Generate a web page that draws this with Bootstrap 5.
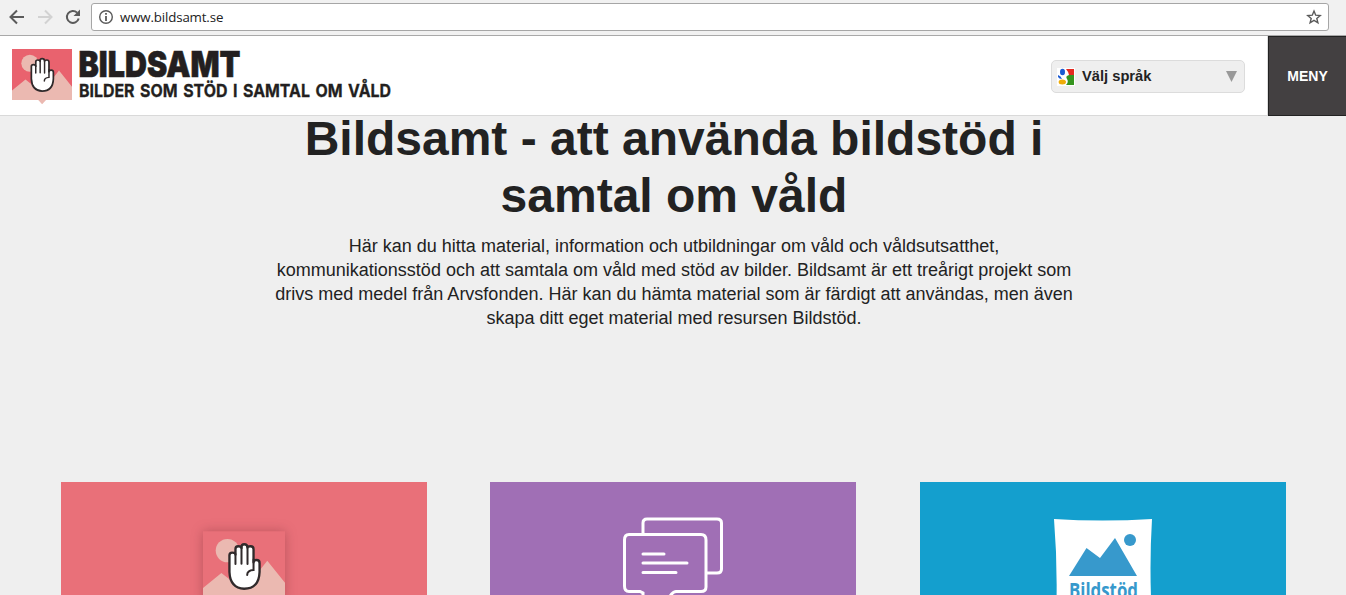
<!DOCTYPE html>
<html lang="sv">
<head>
  <meta charset="UTF-8" />
  <title>Bildsamt</title>
  <link href="https://cdn.jsdelivr.net/npm/bootstrap@5.3.0/dist/css/bootstrap.min.css" rel="stylesheet" />
  <style>
    body {
      background: #efefef;
      color: #222;
      font-family: "Liberation Sans", Arial, sans-serif;
      height: 595px;
      overflow: hidden;
    }
    svg { display: block; flex: none; }

    .browser-bar { height: 36px; background: #f1f1f1; border-bottom: 1px solid #a9a9a9; padding: 0 17px 2px 8px; }
    .browser-nav { width: 83px; }
    .address { height: 28px; border: 1px solid #a6a6a6; border-radius: 3px; padding: 0 6px; font: 13.3px "Open Sans", sans-serif; color: #222; }
    .address-text { margin-left: 6px; letter-spacing: -.15px; }

    .site-header { height: 80px; border-bottom: 1px solid #d9d9d9; padding-left: 12px; z-index: 2; }
    .language { width: 194px; height: 33px; background: #efefef; border: 1px solid #dcdcdc; border-radius: 5px; padding: 0 7px 0 5px; margin: 2px 23px 0 0; font-size: 14.7px; }
    .language-text { margin-left: 7px; }
    .menu-btn { width: 78px; height: 80px; background: #434041; border: 1px solid #222; border-right: 0; font-size: 14px; box-shadow: -1px 0 #ddd; }
    .menu-btn span { position: relative; top: 1px; }

    .intro { height: 366px; margin-top: -6px; padding-left: 2px; }
    .intro h1 { width: 800px; font-size: 48px; line-height: 57px; margin-bottom: 10px; }
    .intro p { width: 810px; font-size: 18px; line-height: 24px; }

    .tiles { width: 1225px; margin: 6px auto 0 61px; gap: 63px; }
    .tile { width: 366px; height: 119px; }
    .tile-red { background: #e97079; padding: 49px 1px 0 0; }
    .tile-purple { background: #a06fb5; padding-top: 34px; }
    .tile-blue { background: #149fce; padding-top: 36px; margin-left: 1px; }
    .tile-shadow { filter: drop-shadow(0 0 6px rgba(80, 20, 30, .3)); }
  </style>
</head>
<body>
  <svg width="0" height="0" class="position-absolute">
    <symbol id="hand" viewBox="0 0 245 226">
      <circle cx="73" cy="58" r="35" fill="#ebb9b1" />
      <path d="M0 170L55 125L96 157L140 154L192 88L245 154V208H139L123 226L107 208H0Z" fill="#ebb9b1" />
      <path d="M79 72Q79 64 87 64Q97 64 97 70V53Q97 45 105 45Q115 45 115 50V47Q115 39 123 39Q133 39 133 49Q134 45 142 45Q151 45 151 54V93Q151 86 160 86Q169 86 169 95V122Q167 172 123 172Q81 170 79 122Z" fill="#fff" stroke="#302a2b" stroke-width="7" stroke-linejoin="round" />
      <path d="M97 68V98M115 49V97M133 49V98M151 85V116Q132 117 132 131" fill="none" stroke="#302a2b" stroke-width="6" stroke-linecap="round" />
    </symbol>
  </svg>

  <!-- Browser toolbar -->
  <div class="browser-bar d-flex align-items-center">
    <div class="browser-nav d-flex gap-2 align-items-center">
      <svg width="18" height="18" viewBox="0 0 18 18" fill="none" stroke="#5a5a5a" stroke-width="2"><path d="M16 9H3M9 2.5L2.5 9L9 15.5" /></svg>
      <svg width="20" height="18" viewBox="0 0 20 18" fill="none" stroke="#d2d2d2" stroke-width="2"><path d="M4 9H17M11 2.5L17.5 9L11 15.5" /></svg>
      <svg width="20" height="18" viewBox="0 0 20 18" fill="none" stroke="#5a5a5a" stroke-width="2"><path d="M16.7 10.5A6 6 0 1 1 15.1 4.6" /><path d="M18 1.5V8H11.5Z" fill="#5a5a5a" stroke="none" /></svg>
    </div>
    <div class="address bg-white d-flex align-items-center flex-grow-1">
      <svg width="16" height="16" viewBox="0 0 16 16" fill="none" stroke="#5a5a5a" stroke-width="1.4"><circle cx="8" cy="8" r="6.3" /><path d="M8 7V12M8 4V5.7" stroke-width="1.8" /></svg>
      <span class="address-text">www.bildsamt.se</span>
      <svg class="ms-auto" width="16" height="16" viewBox="0 0 16 16" fill="none" stroke="#5a5a5a" stroke-width="1.4"><path d="M8 2L9.7 6.2L14.2 6.5L10.8 9.4L11.9 13.8L8 11.4L4.1 13.8L5.2 9.4L1.8 6.5L6.3 6.2Z" /></svg>
    </div>
  </div>

  <!-- Site header -->
  <header class="site-header bg-white d-flex align-items-center position-relative">
    <svg width="380" height="62" viewBox="0 0 380 62">
      <path d="M0 4H60V55H0Z" fill="#e9626e" />
      <use href="#hand" x="0" y="4" width="60" height="55.3" />
      <g font-family="Inter, sans-serif" fill="#231f20">
        <text x="66.500" y="31.500" font-size="35.500" font-weight="900" textLength="162" lengthAdjust="spacingAndGlyphs" stroke="#231f20" stroke-width=".6">BILDSAMT</text>
        <text x="67" y="52" font-size="17.800" font-weight="700" word-spacing="2" textLength="312" lengthAdjust="spacingAndGlyphs" stroke="#231f20" stroke-width=".3">BILDER SOM STÖD I SAMTAL OM VÅLD</text>
      </g>
    </svg>
    <div class="language d-flex align-items-center ms-auto fw-bold">
      <svg width="18" height="18" viewBox="0 0 18 18">
        <path d="M0 0H18V18H0Z" fill="#fff" />
        <path d="M9 1H17V7H12Q11 3 9 1Z" fill="#e52a20" />
        <path d="M12 7H17V17H9Q12 14 10 11Q8 8 12 7Z" fill="#36951f" />
        <ellipse cx="5.5" cy="4" rx="2.5" ry="3.2" fill="#1b5bd3" />
        <path d="M1 7Q4 8 5 11Q2 11 1 9Z" fill="#1b5bd3" />
        <ellipse cx="5.3" cy="14" rx="3.7" ry="2.5" fill="#efac09" />
      </svg>
      <span class="language-text">Välj språk</span>
      <svg class="ms-auto" width="11" height="11" viewBox="0 0 11 11"><path d="M0 0H11L5.5 11Z" fill="#999" /></svg>
    </div>
    <button class="menu-btn text-white fw-bold p-0"><span>MENY</span></button>
  </header>

  <!-- Intro -->
  <main class="intro d-flex flex-column align-items-center text-center">
    <h1 class="fw-bold">Bildsamt - att använda bildstöd i samtal om våld</h1>
    <p>Här kan du hitta material, information och utbildningar om våld och våldsutsatthet, kommunikationsstöd och att samtala om våld med stöd av bilder. Bildsamt är ett treårigt projekt som drivs med medel från Arvsfonden. Här kan du hämta material som är färdigt att användas, men även skapa ditt eget material med resursen Bildstöd.</p>
  </main>

  <!-- Tiles -->
  <div class="tiles d-flex">
    <a class="tile tile-red d-flex justify-content-center overflow-hidden" href="#">
      <svg class="tile-shadow" width="82" height="76" viewBox="0 0 245 226"><path d="M0 0H245V208H0Z" fill="#e97079" /><use href="#hand" width="245" height="226" /></svg>
    </a>
    <a class="tile tile-purple d-flex justify-content-center overflow-hidden" href="#">
      <svg width="102" height="90" viewBox="0 0 102 90" fill="none" stroke="#fff" stroke-width="3" stroke-linecap="round">
        <path d="M21 17V7Q21 3 25 3H95Q99.500 3 99.500 7V53Q99.500 57 95 57H85" />
        <path d="M21 85V77L18 75.500H7Q2.500 75.500 2.500 70V24Q2.500 18.500 7 18.500H79Q84 18.500 84 24V71Q84 75.500 79 75.500H54Q50 76 47 82" />
        <path d="M21 38H42M21 47H65M21 56.500H54" />
      </svg>
    </a>
    <a class="tile tile-blue d-flex justify-content-center overflow-hidden" href="#">
      <svg width="98" height="100" viewBox="0 0 98 100">
        <path d="M0 1Q48 4 98 1Q95 50 98 100H2Q4 50 0 1Z" fill="#fff" />
        <path d="M15 58L32.500 30L46 40L61 20L83 58Z" fill="#3799cc" />
        <circle cx="76" cy="22" r="6" fill="#3799cc" />
        <text x="15" y="80" font-family="Open Sans, sans-serif" font-size="22" font-weight="700" fill="#3799cc" textLength="69" lengthAdjust="spacingAndGlyphs">Bildstöd</text>
      </svg>
    </a>
  </div>

  <script src="https://cdn.jsdelivr.net/npm/bootstrap@5.3.0/dist/js/bootstrap.bundle.min.js"></script>
</body>
</html>
